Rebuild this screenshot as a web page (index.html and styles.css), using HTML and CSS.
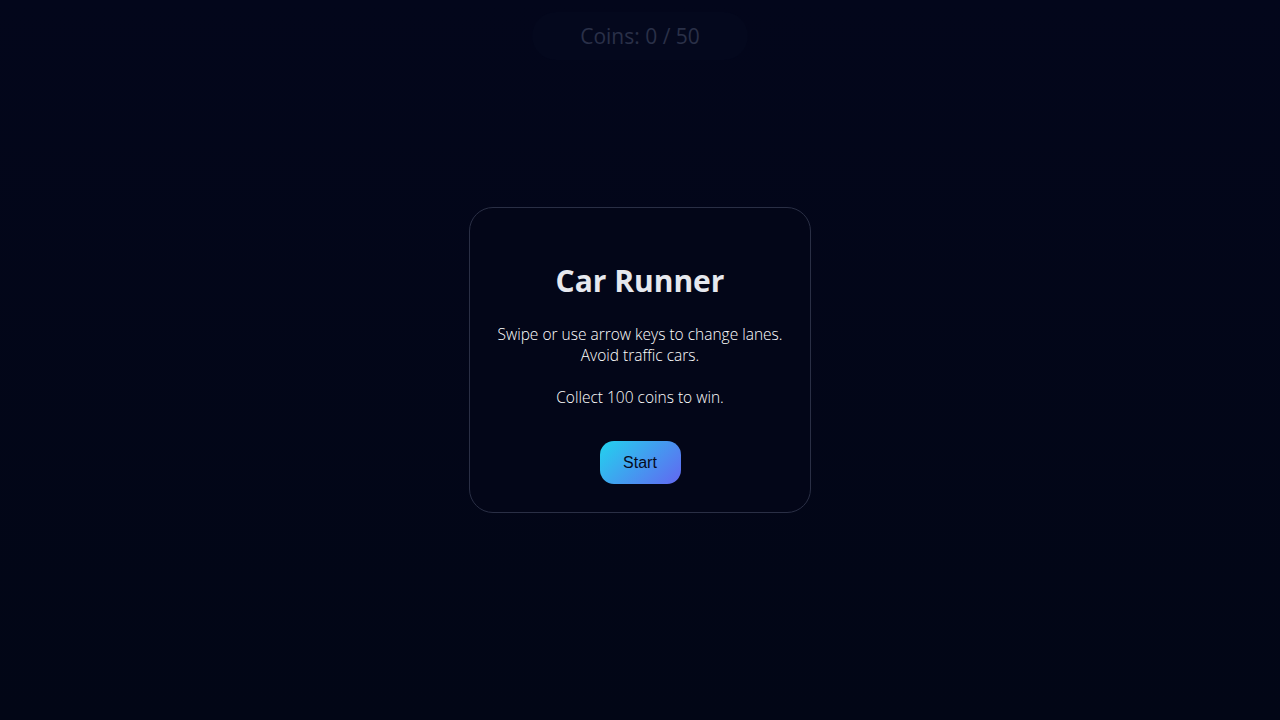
FILE: index.html
```html
<!DOCTYPE html>
<html>
<head>
<meta charset="utf-8">
<link rel="stylesheet" href="styles.css">
</head>
<body>
<div class="screen">
  <div class="hud"><span class="coins">Coins: 0 / 50</span></div>
  <div class="stage">
    <div class="card">
      <h1 class="title">Car Runner</h1>
      <p class="desc">Swipe or use arrow keys to change lanes.<br>Avoid traffic cars.<br><br>Collect 100 coins to win.</p>
      <button class="start">Start</button>
    </div>
  </div>
</div>
</body>
</html>
```
FILE: styles.css
```css
html, body {
  margin: 0;
  padding: 0;
  height: 100%;
}
body {
  background: linear-gradient(180deg, #03061b 0%, #020616 100%);
  font-family: "Open Sans", "Noto Sans", sans-serif;
  overflow: hidden;
}
.screen {
  height: 720px;
  display: flex;
  flex-direction: column;
  align-items: center;
}
.hud {
  margin-top: 12px;
  width: 216px;
  height: 48px;
  border-radius: 24px;
  background: #04081d;
  display: flex;
  align-items: center;
  justify-content: center;
}
.coins {
  color: #2a3048;
  font-size: 21px;
  font-weight: 400;
}
.stage {
  flex: 1;
  display: flex;
  align-items: flex-start;
  justify-content: center;
  padding-top: 147px;
}
.card {
  width: 340px;
  height: 304px;
  box-sizing: content-box;
  border: 1px solid #2a2f45;
  border-radius: 24px;
  background: #030618;
  display: flex;
  flex-direction: column;
  align-items: center;
  text-align: center;
}
.title {
  margin: 58px 0 0;
  font-size: 30px;
  line-height: 30px;
  font-weight: 700;
  color: #e6e8ee;
}
.desc {
  margin: 28px 0 0;
  font-size: 15.5px;
  line-height: 21px;
  font-weight: 300;
  color: #ffffff;
}
.start {
  margin-top: 33px;
  width: 81px;
  height: 43px;
  border: none;
  border-radius: 14px;
  background: linear-gradient(135deg, #22d3ee 0%, #6366f1 100%);
  color: #070b1e;
  font-family: "Liberation Sans", Arial, sans-serif;
  font-size: 16px;
  cursor: pointer;
}
```
